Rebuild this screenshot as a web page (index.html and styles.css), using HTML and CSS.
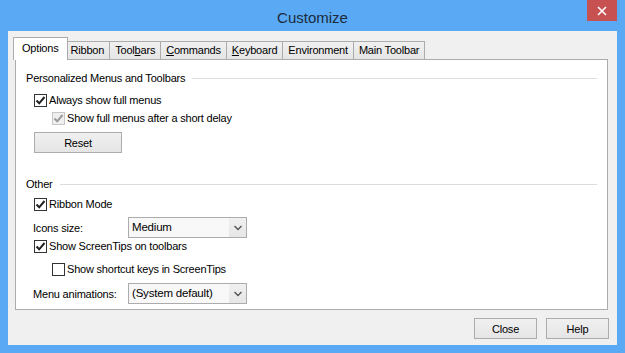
FILE: index.html
```html
<!DOCTYPE html>
<html lang="en">
  <head>
    <meta charset="UTF-8" />
    <meta name="viewport" content="width=device-width, initial-scale=1.0" />
    <title>Customize</title>

    <link rel="stylesheet" href="styles.css">
  </head>
  <body>
    <div class="window">
      <div class="titlebar">
        <span class="title">Customize</span>
        <div class="close-btn">
          <svg width="10" height="10" viewBox="0 0 10 10">
            <path d="M1 1 L9 9 M9 1 L1 9" stroke="#fff" stroke-width="1.6" />
          </svg>
        </div>
      </div>

      <div class="client">
        <div class="tabs">
          <div class="tab active">Options</div>
          <div class="tab">Ribbon</div>
          <div class="tab">Tool<u>b</u>ars</div>
          <div class="tab"><u>C</u>ommands</div>
          <div class="tab"><u>K</u>eyboard</div>
          <div class="tab">Environment</div>
          <div class="tab">Main Toolbar</div>
        </div>

        <div class="panel">
          <div class="group-title">
            <span>Personalized Menus and Toolbars</span>
            <span class="rule"></span>
          </div>

          <div class="check row-always">
            <span class="box">
              <svg width="11" height="11" viewBox="0 0 11 11">
                <path d="M1.5 5.5 L4.2 8.3 L9.5 2" fill="none" stroke="#222" stroke-width="2" />
              </svg>
            </span>
            <span>Always show full menus</span>
          </div>

          <div class="check nested disabled row-delay">
            <span class="box">
              <svg width="11" height="11" viewBox="0 0 11 11">
                <path d="M1.5 5.5 L4.2 8.3 L9.5 2" fill="none" stroke="#9a9a9a" stroke-width="2" />
              </svg>
            </span>
            <span>Show full menus after a short delay</span>
          </div>

          <button class="win-btn reset" type="button">Reset</button>

          <div class="group-title other">
            <span>Other</span>
            <span class="rule"></span>
          </div>

          <div class="check row-ribbon">
            <span class="box">
              <svg width="11" height="11" viewBox="0 0 11 11">
                <path d="M1.5 5.5 L4.2 8.3 L9.5 2" fill="none" stroke="#222" stroke-width="2" />
              </svg>
            </span>
            <span>Ribbon Mode</span>
          </div>

          <div class="field row-icons">
            <span class="field-label">Icons size:</span>
            <div class="select">
              <span class="select-text">Medium</span>
              <span class="select-arrow">
                <svg width="8" height="6" viewBox="0 0 8 6">
                  <path d="M0.5 1 L4 4.5 L7.5 1" fill="none" stroke="#555" stroke-width="1.4" />
                </svg>
              </span>
            </div>
          </div>

          <div class="check row-tips">
            <span class="box">
              <svg width="11" height="11" viewBox="0 0 11 11">
                <path d="M1.5 5.5 L4.2 8.3 L9.5 2" fill="none" stroke="#222" stroke-width="2" />
              </svg>
            </span>
            <span>Show ScreenTips on toolbars</span>
          </div>

          <div class="check nested row-keys">
            <span class="box"></span>
            <span>Show shortcut keys in ScreenTips</span>
          </div>

          <div class="field row-anim">
            <span class="field-label">Menu animations:</span>
            <div class="select">
              <span class="select-text">(System default)</span>
              <span class="select-arrow">
                <svg width="8" height="6" viewBox="0 0 8 6">
                  <path d="M0.5 1 L4 4.5 L7.5 1" fill="none" stroke="#555" stroke-width="1.4" />
                </svg>
              </span>
            </div>
          </div>
        </div>

        <div class="actions">
          <button class="win-btn" type="button">Close</button>
          <button class="win-btn" type="button">Help</button>
        </div>
      </div>
    </div>
  </body>
</html>
```

FILE: styles.css
```css
* {
  box-sizing: border-box;
}

body {
  margin: 0;
  font-family: "Liberation Sans", Arial, sans-serif;
  font-size: 11px;
  letter-spacing: -0.2px;
  color: #000;
  background-color: #5aa9f5;
}

.window {
  width: 625px;
  height: 353px;
  display: flex;
  flex-direction: column;
}

.titlebar {
  height: 31px;
  display: grid;
  grid-template-columns: 1fr auto 1fr;
  align-items: start;
}
.title {
  grid-column: 2;
  font-size: 15px;
  letter-spacing: 0;
  color: #1b2b3b;
  line-height: 15px;
  margin-top: 10px;
}
.close-btn {
  grid-column: 3;
  justify-self: end;
  width: 30px;
  height: 21px;
  margin-right: 8px;
  background-color: #c75050;
  display: flex;
  align-items: center;
  justify-content: center;
}

.client {
  margin: 0 8px;
  height: 314px;
  background-color: #f0f0f0;
  padding: 6px 9px 0 7px;
  display: flex;
  flex-direction: column;
}

/* tabs */
.tabs {
  display: flex;
  height: 23px;
  margin-bottom: -1px;
}
.tab {
  height: 18px;
  margin-top: 4px;
  padding: 0 5px;
  margin-left: -1px;
  border: 1px solid #acacac;
  border-bottom: none;
  background: linear-gradient(#f0f0f0, #e5e5e5);
  line-height: 16px;
  white-space: nowrap;
}
.tab u {
  text-decoration-thickness: 1px;
  text-underline-offset: 1px;
}
.tab.active {
  position: relative;
  z-index: 1;
  height: 23px;
  margin: 0 -2px 0 -2px;
  padding: 0 8px;
  background: #fff;
  line-height: 21px;
}

.panel {
  height: 251px;
  border: 1px solid #acacac;
  background-color: #fff;
  padding: 11px 10px 0 10px;
  display: flex;
  flex-direction: column;
  align-items: flex-start;
}

.group-title {
  align-self: stretch;
  display: flex;
  align-items: center;
  height: 14px;
  line-height: 14px;
}
.group-title .rule {
  flex: 1;
  height: 1px;
  margin-left: 7px;
  background-color: #dcdcdc;
}
.group-title.other {
  margin-top: 24px;
}

.check {
  display: flex;
  align-items: center;
  column-gap: 2px;
  height: 14px;
  margin-left: 8px;
  white-space: nowrap;
}
.check.nested {
  margin-left: 26px;
}
.check .box {
  width: 13px;
  height: 13px;
  border: 1px solid #333;
  background-color: #fff;
  display: flex;
  align-items: center;
  justify-content: center;
}
.check.disabled .box {
  border-color: #c6c6c6;
  background-color: #efefef;
}

.row-always {
  margin-top: 8px;
}
.row-delay {
  margin-top: 4px;
}
.row-ribbon {
  margin-top: 6px;
}
.row-tips {
  margin-top: 1px;
}
.row-keys {
  margin-top: 9px;
}

.field {
  display: flex;
  align-items: center;
  margin-left: 7px;
}
.row-icons {
  margin-top: 6px;
}
.row-anim {
  margin-top: 7px;
}
.field-label {
  width: 95px;
}

.select {
  width: 119px;
  height: 21px;
  border: 1px solid #acacac;
  display: flex;
  background-color: #f8f8f8;
}
.select-text {
  flex: 1;
  padding-left: 3px;
  line-height: 19px;
  font-size: 11.5px;
}
.select-arrow {
  width: 17px;
  display: flex;
  align-items: center;
  justify-content: center;
  background: linear-gradient(#f0f0f0, #e6e6e6);
}

.win-btn {
  font-family: inherit;
  font-size: 11px;
  letter-spacing: -0.2px;
  color: #000;
  border: 1px solid #acacac;
  background: linear-gradient(#f0f0f0, #e5e5e5);
  padding: 0;
  height: 21px;
  width: 63px;
}
.win-btn.reset {
  width: 88px;
  margin: 7px 0 0 8px;
}

.actions {
  display: flex;
  justify-content: flex-end;
  column-gap: 9px;
  margin-top: 8px;
  margin-right: -1px;
}
```
